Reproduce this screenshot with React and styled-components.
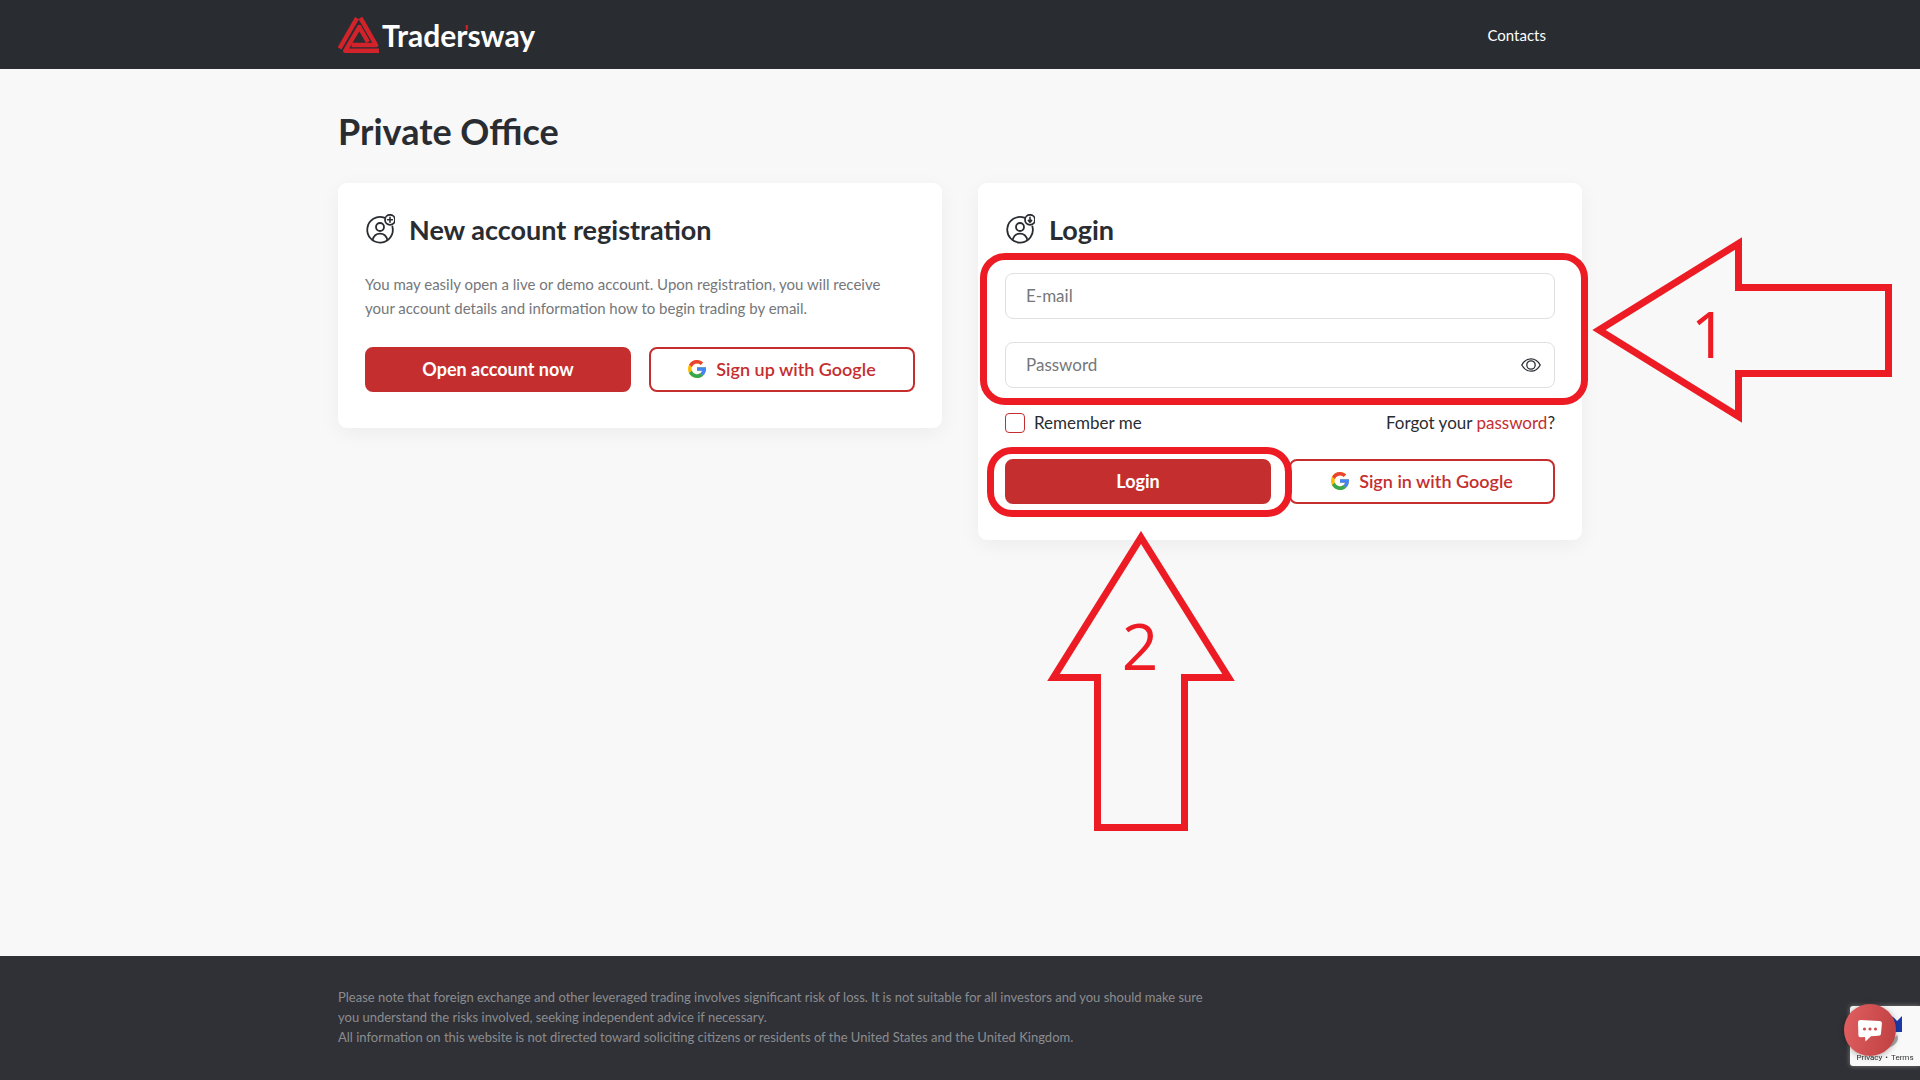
import React from 'react';
import styled, { createGlobalStyle, css } from 'styled-components';

const GlobalStyle = createGlobalStyle`
  *, *::before, *::after { box-sizing: border-box; }
  body {
    margin: 0;
    background: #f8f8f8;
    color: #292d32;
    font-family: Lato, "Open Sans", sans-serif;
    font-size: 17px;
    line-height: 24px;
    overflow-x: hidden;
  }
  h1, h2, p { margin: 0; }
  a { text-decoration: none; }
`;

const Page = styled.div`
  min-height: 100vh;
  display: flex;
  flex-direction: column;
`;

const Container = styled.div`
  width: 100%;
  max-width: 1274px;
  margin: 0 auto;
  padding: 0 15px;
`;

const Header = styled.header`
  background: #292d32;
`;

const HeaderRow = styled(Container)`
  display: flex;
  align-items: center;
  justify-content: space-between;
  min-height: 69px;
`;

const Brand = styled.a`
  display: flex;
  align-items: center;
  gap: 3px;
  color: #fff;
`;

const BrandName = styled.span`
  font-size: 30px;
  line-height: 36px;
  font-weight: 700;
`;

const Apostrophe = styled.span`
  position: absolute;
  margin-left: -3px;
  color: #d2232a;
  font-size: 18px;
  line-height: 30px;
`;

const NavLink = styled.a`
  padding: 8px 36px;
  color: #fff;
  font-size: 15px;
`;

const Main = styled.main`
  flex: 1;
  padding: 40px 0;
`;

const Title = styled.h1`
  margin-bottom: 30px;
  font-size: 36px;
  line-height: 44px;
  font-weight: 700;
`;

const Columns = styled.div`
  display: grid;
  grid-template-columns: 1fr 1fr;
  align-items: start;
  gap: 36px;
`;

const Card = styled.section`
  position: relative;
  padding: 27px 27px 36px;
  border-radius: 9px;
  background: #fff;
  box-shadow: 0 5px 20px rgba(0, 0, 0, 0.05);
`;

const CardHeading = styled.div`
  display: flex;
  align-items: center;
  gap: 14px;
  margin-bottom: 22px;
`;

const FormHeading = styled(CardHeading)`
  margin-bottom: 23px;
`;

const CardTitle = styled.h2`
  font-size: 27px;
  line-height: 40px;
  font-weight: 700;
`;

const Lead = styled.p`
  max-width: 540px;
  margin-bottom: 27px;
  color: #75777a;
  font-size: 15px;
`;

const Actions = styled.div`
  display: grid;
  grid-template-columns: 1fr 1fr;
  gap: 18px;
`;

const Button = styled.button`
  display: flex;
  align-items: center;
  justify-content: center;
  gap: 10px;
  width: 100%;
  height: 45px;
  padding: 0 12px 2px;
  border: 2px solid #c52e2f;
  border-radius: 8px;
  font: inherit;
  font-size: 18px;
  cursor: pointer;
  ${({ $outline }) =>
    $outline
      ? css`
          background: #fff;
          color: #c52e2f;
          font-weight: 600;
        `
      : css`
          background: #c52e2f;
          color: #fff;
          font-weight: 700;
        `}
`;

const highlight = css`
  position: relative;
  &::after {
    content: "";
    position: absolute;
    z-index: 1;
    border: 7px solid #ed1c24;
    border-radius: 25px;
    pointer-events: none;
  }
`;

const Fields = styled.div`
  ${highlight}
  display: grid;
  gap: 23px;
  margin-bottom: 23px;
  &::after { inset: -20px -33px -17px -25px; }
`;

const MarkedAction = styled.div`
  ${highlight}
  &::after { inset: -12px -21px -13px -18px; }
`;

const Field = styled.div`
  display: flex;
  align-items: center;
  height: 46px;
  padding-right: 13px;
  border: 1px solid #dfdfe0;
  border-radius: 8px;
  background: #fff;
`;

const Input = styled.input`
  flex: 1;
  min-width: 0;
  height: 100%;
  padding: 0 20px 2px;
  border: 0;
  outline: 0;
  background: none;
  color: #292d32;
  font: inherit;
  &::placeholder { color: #75777a; opacity: 1; }
`;

const IconButton = styled.button`
  display: flex;
  padding: 0;
  border: 0;
  background: none;
  color: #292d32;
  cursor: pointer;
`;

const Options = styled.div`
  display: flex;
  align-items: center;
  justify-content: space-between;
  margin-bottom: 24px;
`;

const Remember = styled.label`
  display: flex;
  align-items: center;
  gap: 9px;
`;

const Checkbox = styled.input`
  appearance: none;
  width: 20px;
  height: 20px;
  margin: 0;
  border: 1px solid #c52e2f;
  border-radius: 4px;
  background: #fff;
  &:checked { background: #c52e2f; }
`;

const RedLink = styled.a`
  color: #c52e2f;
`;

const Arrow = styled.svg`
  position: absolute;
  z-index: 2;
  fill: none;
  stroke: #ed1c24;
  stroke-width: 7;
  pointer-events: none;
  text {
    fill: #ed1c24;
    stroke: none;
    font: 400 64px "Open Sans", sans-serif;
    text-anchor: middle;
  }
`;

const FieldsArrow = styled(Arrow)`
  left: calc(100% + 10px);
  top: 54px;
`;

const LoginArrow = styled(Arrow)`
  left: 69px;
  top: 348px;
`;

const Footer = styled.footer`
  padding: 31px 0 33px;
  background: #303136;
  color: #8b8c8f;
  font-size: 13px;
  line-height: 20px;
`;

const Disclaimer = styled.p`
  max-width: 876px;
`;

const Captcha = styled.aside`
  position: fixed;
  right: 0;
  bottom: 14px;
  width: 70px;
  height: 60px;
  display: flex;
  flex-direction: column;
  justify-content: flex-end;
  align-items: center;
  border-radius: 3px 0 0 3px;
  background: #f9f9f9;
  box-shadow: 0 0 5px gray;
`;

const CaptchaMark = styled.svg`
  position: absolute;
  right: 16px;
  top: 8px;
`;

const CaptchaLinks = styled.div`
  display: flex;
  gap: 3px;
  color: #333;
  font: 8px/16px Roboto, sans-serif;
  a { color: inherit; }
`;

const ChatButton = styled.button`
  position: fixed;
  right: 24px;
  bottom: 24px;
  display: flex;
  align-items: center;
  justify-content: center;
  width: 52px;
  height: 52px;
  padding: 0;
  border: 0;
  border-radius: 50%;
  background: linear-gradient(100deg, #e05f60, #bf4041);
  box-shadow: 0 1px 6px rgba(0, 0, 0, 0.3);
  cursor: pointer;
`;

const LogoMark = () => (
  <svg width="41" height="36" viewBox="0 0 41 36" fill="none" stroke="#d2232a" strokeWidth="4.4" strokeLinejoin="round">
    <path d="M1.6 31.5 19 1.2" />
    <path d="M22.4 .8 38 28H13.5" />
    <path d="M41 33.8H7.2L21.3 10 30 25" />
  </svg>
);

const UserIcon = ({ badge }) => (
  <svg width="30" height="32" viewBox="-1 0 30 32" fill="none" stroke="#292d32" strokeWidth="1.8" strokeLinecap="round">
    <path d="M18.3 3.7A12.8 12.8 0 1 0 26.4 12.4" />
    <circle cx="14" cy="13" r="4" />
    <path d="M6.6 26c1-4.2 3.8-6.4 7.4-6.4s6.4 2.2 7.4 6.4" />
    <circle cx="24" cy="5.8" r="5" />
    <path d={badge} strokeWidth="1.6" />
  </svg>
);

const PLUS = 'M24 3.4V8.2M21.6 5.8H26.4';
const DOWN = 'M24 3.2V8.2M22.4 6.4 24 8.2 25.6 6.4';

const GoogleIcon = () => (
  <svg width="18" height="18" viewBox="4 4 40 40">
    <path fill="#FBBC05" d="M43.611 20.083H42V20H24v8h11.303c-1.649 4.657-6.080 8-11.303 8-6.627 0-12-5.373-12-12s5.373-12 12-12c3.059 0 5.842 1.154 7.961 3.039l5.657-5.657C34.046 6.053 29.268 4 24 4 12.955 4 4 12.955 4 24s8.955 20 20 20 20-8.955 20-20c0-1.341-.138-2.650-.389-3.917z" />
    <path fill="#EA4335" d="m6.306 14.691 6.571 4.819C14.655 15.108 18.961 12 24 12c3.059 0 5.842 1.154 7.961 3.039l5.657-5.657C34.046 6.053 29.268 4 24 4 16.318 4 9.656 8.337 6.306 14.691z" />
    <path fill="#34A853" d="M24 44c5.166 0 9.860-1.977 13.409-5.192l-6.190-5.238C29.211 35.091 26.715 36 24 36c-5.202 0-9.619-3.317-11.283-7.946l-6.522 5.025C9.505 39.556 16.227 44 24 44z" />
    <path fill="#4285F4" d="M43.611 20.083H42V20H24v8h11.303c-.792 2.237-2.231 4.166-4.087 5.571l6.190 5.238C36.971 39.205 44 34 44 24c0-1.341-.138-2.650-.389-3.917z" />
  </svg>
);

const EyeIcon = () => (
  <svg width="20" height="14" viewBox="0 0 20 14" fill="none" stroke="currentColor" strokeWidth="1.3">
    <path d="M.8 7C3 2.8 6.3.8 10 .8S17 2.8 19.2 7C17 11.2 13.7 13.2 10 13.2S3 11.2.8 7z" />
    <circle cx="10" cy="7" r="4.2" />
  </svg>
);

export default function App() {
  return (
    <Page>
      <GlobalStyle />
      <Header>
        <HeaderRow>
          <Brand href="#">
            <LogoMark />
            <BrandName>
              Trader<Apostrophe>'</Apostrophe>sway
            </BrandName>
          </Brand>
          <NavLink href="#contacts">Contacts</NavLink>
        </HeaderRow>
      </Header>

      <Main>
        <Container>
          <Title>Private Office</Title>
          <Columns>
            <Card>
              <CardHeading>
                <UserIcon badge={PLUS} />
                <CardTitle>New account registration</CardTitle>
              </CardHeading>
              <Lead>
                You may easily open a live or demo account. Upon registration, you will receive your account
                details and information how to begin trading by email.
              </Lead>
              <Actions>
                <Button type="button">Open account now</Button>
                <Button type="button" $outline>
                  <GoogleIcon />
                  Sign up with Google
                </Button>
              </Actions>
            </Card>

            <Card>
              <FormHeading>
                <UserIcon badge={DOWN} />
                <CardTitle>Login</CardTitle>
              </FormHeading>
              <form onSubmit={(e) => e.preventDefault()}>
                <Fields>
                  <Field>
                    <Input type="email" placeholder="E-mail" aria-label="E-mail" />
                  </Field>
                  <Field>
                    <Input type="password" placeholder="Password" aria-label="Password" />
                    <IconButton type="button" aria-label="Show password">
                      <EyeIcon />
                    </IconButton>
                  </Field>
                </Fields>
                <Options>
                  <Remember>
                    <Checkbox type="checkbox" />
                    Remember me
                  </Remember>
                  <span>
                    Forgot your <RedLink href="#password">password</RedLink>?
                  </span>
                </Options>
                <Actions>
                  <MarkedAction>
                    <Button type="submit">Login</Button>
                  </MarkedAction>
                  <Button type="button" $outline>
                    <GoogleIcon />
                    Sign in with Google
                  </Button>
                </Actions>
              </form>

              <FieldsArrow width="301" height="188" viewBox="0 0 301 188">
                <path d="M7 93 146.5 6.5V50.5H296.5V136.5H146.5V179.5z" />
                <text x="117" y="121">1</text>
              </FieldsArrow>
              <LoginArrow width="188" height="301" viewBox="0 0 188 301">
                <path d="M94 6.5 181.5 146.5H137.5V296.5H50.5V146.5H6.5z" />
                <text x="93" y="139">2</text>
              </LoginArrow>
            </Card>
          </Columns>
        </Container>
      </Main>

      <Footer>
        <Container>
          <Disclaimer>
            Please note that foreign exchange and other leveraged trading involves significant risk of loss. It is
            not suitable for all investors and you should make sure you understand the risks involved, seeking
            independent advice if necessary.
          </Disclaimer>
          <Disclaimer>
            All information on this website is not directed toward soliciting citizens or residents of the United
            States and the United Kingdom.
          </Disclaimer>
        </Container>
      </Footer>

      <Captcha>
        <CaptchaMark width="40" height="40" viewBox="0 0 40 40">
          <path fill="#1c3aa9" d="M38 2v16H24l5-5c-3-5-7-6-11-6V0c7 0 11 2 15 7z" />
          <path fill="#ababab" d="M6 22c3 8 14 12 22 4l5-5c2 3 1 7-3 10-9 7-20 4-24-9z" />
        </CaptchaMark>
        <CaptchaLinks>
          <a href="#privacy">Privacy</a>
          <span>•</span>
          <a href="#terms">Terms</a>
        </CaptchaLinks>
      </Captcha>
      <ChatButton type="button" aria-label="Open chat">
        <svg width="24" height="23" viewBox="0 0 24 23">
          <path fill="#fff" d="M2.5 1 21.5 2C23.2 2.1 24 3 23.9 4.5L23 14.5C22.9 16 22 16.7 20.5 16.8L13 17.2 7.5 22.5 7 18 2.5 18.2C1 18.2.5 17.5.4 16L0 3.5C0 2 .8 1 2.5 1z" />
          <g fill="#cf4f50">
            <circle cx="6.5" cy="10" r="1.6" />
            <circle cx="12" cy="10" r="1.6" />
            <circle cx="17.5" cy="10" r="1.6" />
          </g>
        </svg>
      </ChatButton>
    </Page>
  );
}
